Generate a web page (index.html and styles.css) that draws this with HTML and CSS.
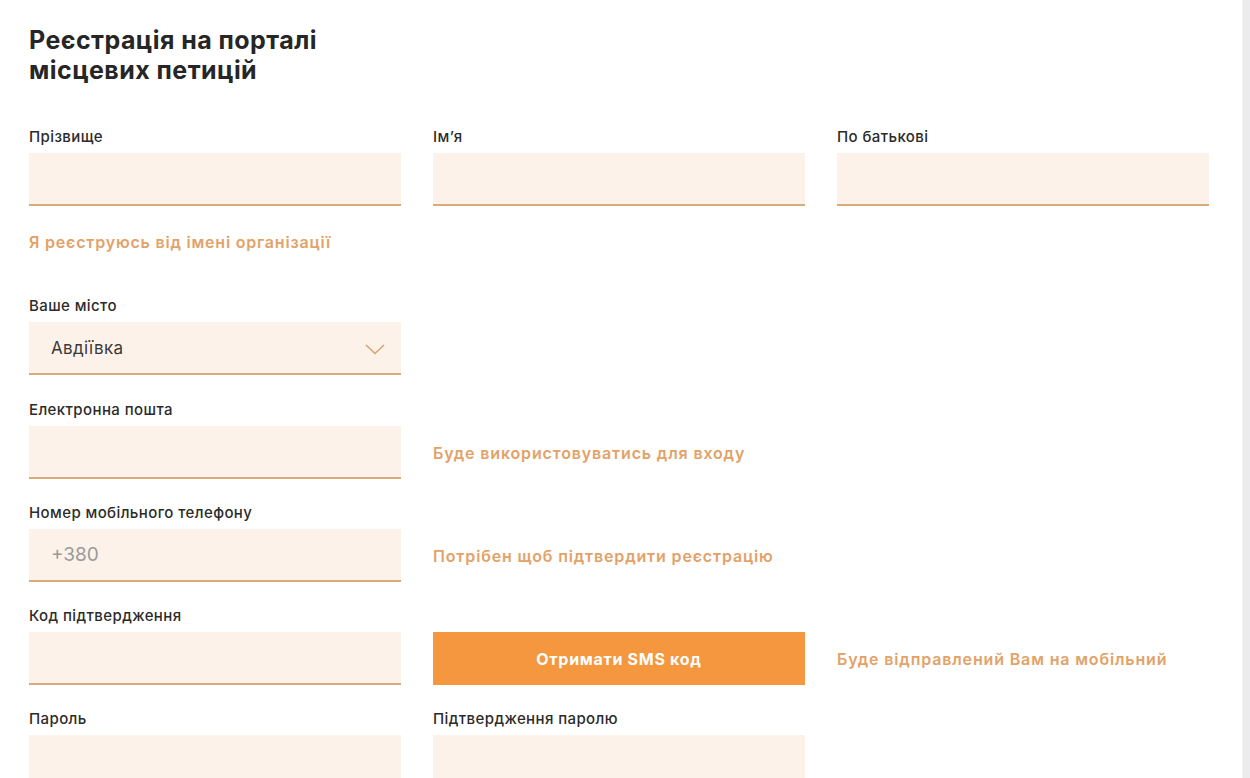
FILE: index.html
```html
<!DOCTYPE html>
<html lang="uk">
<head>
<meta charset="utf-8">
<title>Реєстрація на порталі місцевих петицій</title>
<link rel="stylesheet" href="styles.css">
</head>
<body>
<div class="page">
  <main class="main">
    <h1 class="title">Реєстрація на порталі<br>місцевих петицій</h1>

    <div class="row">
      <div class="field">
        <label class="label">Прізвище</label>
        <input class="input" type="text">
      </div>
      <div class="field">
        <label class="label">Ім’я</label>
        <input class="input" type="text">
      </div>
      <div class="field">
        <label class="label">По батькові</label>
        <input class="input" type="text">
      </div>
    </div>

    <a class="org-link" href="#">Я реєструюсь від імені організації</a>

    <div class="row row-city">
      <div class="field">
        <label class="label">Ваше місто</label>
        <div class="select">
          <span class="select-value">Авдіївка</span>
          <svg class="chevron" width="20" height="11" viewBox="0 0 20 11"><path d="M1 1 L10 9.5 L19 1" fill="none" stroke="#d6a46e" stroke-width="1.6"/></svg>
        </div>
      </div>
    </div>

    <div class="row">
      <div class="field">
        <label class="label">Електронна пошта</label>
        <input class="input" type="email">
      </div>
      <div class="note">Буде використовуватись для входу</div>
    </div>

    <div class="row">
      <div class="field">
        <label class="label">Номер мобільного телефону</label>
        <input class="input" type="tel" placeholder="+380">
      </div>
      <div class="note">Потрібен щоб підтвердити реєстрацію</div>
    </div>

    <div class="row">
      <div class="field">
        <label class="label">Код підтвердження</label>
        <input class="input" type="text">
      </div>
      <button class="btn" type="button">Отримати SMS код</button>
      <div class="note">Буде відправлений Вам на мобільний</div>
    </div>

    <div class="row">
      <div class="field">
        <label class="label">Пароль</label>
        <input class="input" type="password">
      </div>
      <div class="field">
        <label class="label">Підтвердження паролю</label>
        <input class="input" type="password">
      </div>
    </div>
  </main>
  <div class="scrollbar"></div>
</div>
</body>
</html>
```
FILE: styles.css
```css
* { box-sizing: border-box; }

html, body {
  margin: 0;
  padding: 0;
  height: 100%;
  overflow: hidden;
  background: #ffffff;
  font-family: Inter, "Noto Sans", "DejaVu Sans", sans-serif;
  color: #2b2b2b;
}

.page {
  display: flex;
  height: 778px;
}

.main {
  flex: 1;
  padding: 25px 0 0 29px;
}

.scrollbar {
  width: 8px;
  flex: none;
  background: #ececef;
  border-left: 1px solid #f3f3f5;
}

.title {
  margin: 0 0 42px;
  font-size: 25px;
  line-height: 30px;
  font-weight: 700;
  color: #262626;
  letter-spacing: 0.45px;
}

.row {
  display: grid;
  grid-template-columns: 372px 372px 372px;
  column-gap: 32px;
  align-items: end;
  margin-bottom: 24px;
}

.row-city {
  margin-bottom: 25px;
}

.field {
  display: flex;
  flex-direction: column;
}

.label {
  font-size: 15px;
  line-height: 20px;
  font-weight: 500;
  letter-spacing: 0.4px;
  color: #2b2b2b;
  margin-bottom: 6px;
}

.input {
  height: 53px;
  border: none;
  border-bottom: 2px solid #d9ab7b;
  background: #fdf2e9;
  padding: 0 22px;
  font-family: inherit;
  font-size: 19px;
  color: #444;
  outline: none;
}

.input::placeholder {
  color: #9a9a9a;
}

.org-link {
  display: block;
  margin: 26px 0 44px;
  font-size: 16px;
  line-height: 20px;
  font-weight: 600;
  letter-spacing: 0.8px;
  color: #e2a268;
  text-decoration: none;
}

.select {
  height: 53px;
  border-bottom: 2px solid #d9ab7b;
  background: #fdf2e9;
  padding: 0 16px 0 22px;
  display: flex;
  align-items: center;
  justify-content: space-between;
}

.select-value {
  font-size: 17px;
  letter-spacing: 0.3px;
  color: #3a3a3a;
}

.chevron {
  margin-top: 3px;
}

.note {
  height: 53px;
  display: flex;
  align-items: center;
  font-size: 16px;
  font-weight: 600;
  letter-spacing: 0.85px;
  color: #e2a268;
}

.btn {
  height: 53px;
  border: none;
  background: #f5973e;
  color: #ffffff;
  font-family: inherit;
  font-size: 16px;
  font-weight: 700;
  letter-spacing: 0.7px;
  cursor: pointer;
}
```
